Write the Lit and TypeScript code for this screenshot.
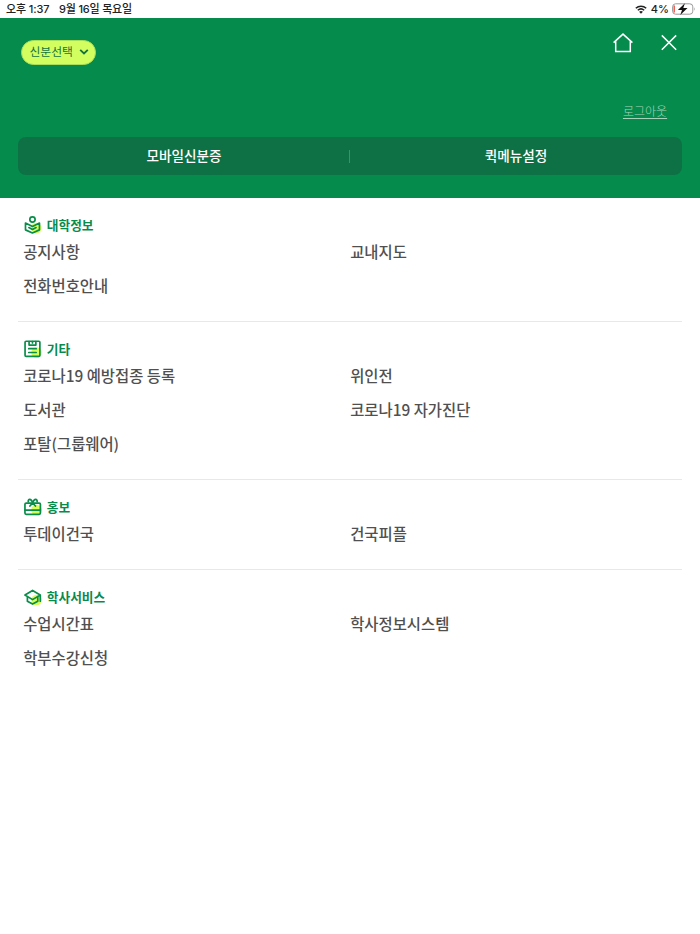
import { LitElement, html, css, svg } from "lit";
import { customElement } from "lit/decorators.js";

const blob = (cx: number, cy: number) => svg`<circle class="blob" cx=${cx} cy=${cy} r="5"></circle>`;

const icons: Record<string, unknown> = {
  info: svg`${blob(11.6, 11.4)}
    <circle cx="8" cy="3.3" r="2.5"></circle>
    <path d="M1.4 6.7 8 9.9 14.6 6.7V13.1L8 16 1.4 13.1ZM4.6 10.9 8 12.7 11.4 10.9"></path>`,
  etc: svg`${blob(11.8, 11.8)}
    <rect x="1" y="1.2" width="14" height="14.2" rx="1"></rect>
    <path d="M4.8 1.4V4.8H11.2V1.4M8 1.6V2.8M4.5 8.2H11.5M4.5 11.8H11.5"></path>`,
  gift: svg`${blob(11.8, 11.4)}
    <rect x="0.9" y="4.8" width="14.6" height="10.6" rx="1.2"></rect>
    <path d="M1 11.4H15.4M8.2 4.4C6.6.4 3.8.6 4 3.6M8.2 4.4C9.8.4 12.6.6 12.4 3.6M8.2 4.6 5.6 7.6M8.2 4.6 10.8 7.6"></path>`,
  cap: svg`${blob(11.8, 11.4)}
    <path d="M.9 6.7 8.1 2.3 15.3 6.7 8.1 11ZM3.2 8.4V12.5L8.1 15.2 13 12.5V8.4M15.4 6.8V12.4"></path>`,
};

const sections = [
  { icon: "info", title: "대학정보", items: ["공지사항", "교내지도", "전화번호안내"] },
  { icon: "etc", title: "기타", items: ["코로나19 예방접종 등록", "위인전", "도서관", "코로나19 자가진단", "포탈(그룹웨어)"] },
  { icon: "gift", title: "홍보", items: ["투데이건국", "건국피플"] },
  { icon: "cap", title: "학사서비스", items: ["수업시간표", "학사정보시스템", "학부수강신청"] },
];

@customElement("app-root")
export class AppRoot extends LitElement {
  static styles = css`
    :host { display: block; height: 934px; overflow: hidden; background: #fff; color: #505050; font-family: "Noto Sans CJK KR", sans-serif; }
    * { box-sizing: border-box; }
    svg { display: block; flex: none; fill: none; }
    .status { height: 18.4px; padding: 0 4px 0 6px; display: flex; align-items: center; color: #222; font: 500 11px/18px Inter, "Noto Sans CJK KR", sans-serif; white-space: nowrap; }
    .time { width: 53px; letter-spacing: -0.1px; }
    .date { letter-spacing: -0.2px; }
    .right { margin-left: auto; display: flex; align-items: center; }
    .wifi { margin-right: 4px; }
    .battery { margin-left: 3px; }
    .head { height: 179.6px; padding: 0 18.4px; background: #058b4c; }
    .top { display: flex; height: 84px; align-items: flex-start; }
    .pill { margin: 21.6px 0 0 2.6px; width: 75px; height: 25px; padding: 0 6px 0 7.5px; border-radius: 12.5px; background: #d2ff5f; border: 1px solid #a9de5a; color: #15723f; display: flex; align-items: center; justify-content: space-between; font-size: 11.8px; line-height: 20px; white-space: nowrap; }
    .pill span { height: 22px; }
    .tools { margin: 14.6px 5px 0 auto; display: flex; align-items: center; gap: 28px; stroke: #fff; }
    .account { height: 35px; padding: 0 14.5px 0 0; display: flex; justify-content: flex-end; }
    .logout { font-size: 12px; line-height: 17px; font-weight: 300; color: #a4d3b9; text-decoration: underline; text-underline-offset: 2px; text-decoration-thickness: 1px; }
    .quick { height: 38px; border-radius: 8px; background: #0e7045; display: flex; align-items: center; color: #fff; font-size: 13.6px; font-weight: 500; }
    .quick span { flex: 1; text-align: center; height: 38px; line-height: 36px; }
    .quick i { width: 1px; height: 13px; margin: 0 1px 0 -1px; background: #3f9068; }
    .menu { padding: 0 18.4px; }
    .section { padding: 16.8px 0 18.2px 4.8px; border-bottom: 1px solid #e8e8e8; }
    .section:last-child { border-bottom: 0; }
    .title { height: 20.5px; display: flex; align-items: center; gap: 5px; padding-left: 0.6px; color: #078a4b; font-size: 12.7px; font-weight: 700; line-height: 20.5px; }
    .title svg { stroke: #0a8c4a; stroke-width: 1.6; stroke-linejoin: round; stroke-linecap: round; }
    .blob { fill: #d8ff57; stroke: none; }
    .grid { display: grid; grid-template-columns: 327px 1fr; grid-auto-rows: 33.75px; align-items: center; font-size: 15.4px; font-weight: 500; line-height: 33.75px; white-space: nowrap; }
  `;

  render() {
    return html`
      <div class="status">
        <span class="time">오후 1:37</span><span class="date">9월 16일 목요일</span>
        <div class="right">
          <svg class="wifi" width="12" height="9" viewBox="0 0 12 9">
            <path d="M.8 3.3C3.8.5 8.2.5 11.2 3.3M2.8 5.3C4.7 3.6 7.3 3.6 9.2 5.3" stroke="#222" stroke-width="1.5"></path>
            <path d="M6 8.7 4.1 6.8Q6 5.2 7.9 6.8Z" fill="#222"></path>
          </svg>
          <span>4%</span>
          <svg class="battery" width="24" height="12" viewBox="0 0 24 12">
            <rect x=".6" y=".8" width="20.2" height="10.4" rx="3" stroke="#999"></rect>
            <path d="M2.2 2.4V9.6" stroke="#f04438" stroke-width="1.3"></path>
            <path d="M22.3 4.2Q23.8 6 22.3 7.8Z" fill="#999"></path>
            <path d="M12.9.3 5.9 6.9H10L8.3 11.9 15.5 5.1H11.3Z" fill="#111"></path>
          </svg>
        </div>
      </div>
      <header class="head">
        <div class="top">
          <div class="pill"><span>신분선택</span>
            <svg width="10" height="6" viewBox="0 0 10 6"><path d="M1.2.9 5 4.4 8.8.9" stroke="#15723f" stroke-width="1.9"></path></svg>
          </div>
          <div class="tools">
            <svg width="20" height="20" viewBox="0 0 20 20"><path d="M.6 9.6 10 1.1 19.4 9.6M2.7 8V18.4H17.3V8" stroke-width="1.5"></path></svg>
            <svg width="16" height="20" viewBox="0 0 16 20"><path d="M.8 2.4 15.2 16.8M15.2 2.4.8 16.8" stroke-width="1.5"></path></svg>
          </div>
        </div>
        <div class="account"><span class="logout">로그아웃</span></div>
        <div class="quick"><span>모바일신분증</span><i></i><span>퀵메뉴설정</span></div>
      </header>
      <main class="menu">
        ${sections.map((s) => html`
          <section class="section">
            <div class="title"><svg width="18" height="18" viewBox="0 0 17 17">${icons[s.icon]}</svg>${s.title}</div>
            <div class="grid">${s.items.map((t) => html`<span>${t}</span>`)}</div>
          </section>`)}
      </main>`;
  }
}
